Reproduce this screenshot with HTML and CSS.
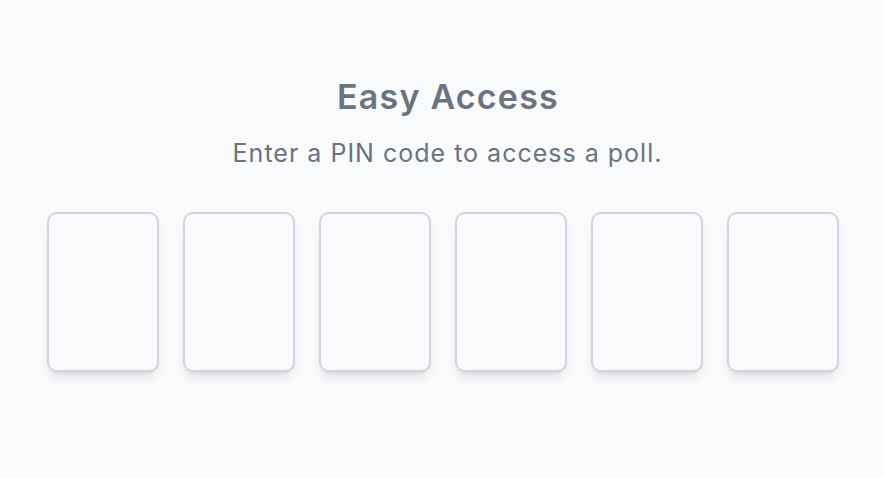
FILE: index.html
```html
<!DOCTYPE html>
<html lang="en">
<head>
    <meta charset="UTF-8">
    <meta name="viewport" content="width=device-width, initial-scale=1.0">
    <title>Easy Access</title>
    <link rel="stylesheet" href="styles.css">
</head>
<body>

    <div class="access-container">
        <h2>Easy Access</h2>
        <p class="subtitle">Enter a PIN code to access a poll.</p>

        <form class="pin-form">
            <input type="text" class="pin-box" maxlength="1" aria-label="PIN digit 1">
            <input type="text" class="pin-box" maxlength="1" aria-label="PIN digit 2">
            <input type="text" class="pin-box" maxlength="1" aria-label="PIN digit 3">
            <input type="text" class="pin-box" maxlength="1" aria-label="PIN digit 4">
            <input type="text" class="pin-box" maxlength="1" aria-label="PIN digit 5">
            <input type="text" class="pin-box" maxlength="1" aria-label="PIN digit 6">
        </form>
    </div>

</body>
</html>
```

FILE: styles.css
```css
body {
    margin: 0;
    height: 100vh;
    background: #f9fafb;
    font-family: Inter, "Noto Sans", sans-serif;
    color: #6b7280;
}

.access-container {
    text-align: center;
    padding-top: 75px;
}

.access-container h2 {
    margin: 0;
    padding-left: 12px;
    font-size: 34px;
    font-weight: 600;
    line-height: 44px;
    letter-spacing: 1.2px;
}

.subtitle {
    margin: 18px 0 0;
    padding-left: 11px;
    font-size: 25px;
    line-height: 32px;
    letter-spacing: 1px;
}

.pin-form {
    display: flex;
    justify-content: center;
    gap: 24px;
    margin-top: 43px;
    padding-left: 2px;
}

.pin-box {
    width: 112px;
    height: 160px;
    box-sizing: border-box;
    border: 2px solid #d1d5db;
    border-radius: 10px;
    background: #f9fafb;
    box-shadow: 0 8px 12px -3px rgba(0, 0, 0, 0.1), 0 3px 5px -3px rgba(0, 0, 0, 0.1);
    font-size: 48px;
    text-align: center;
    color: #374151;
    outline: none;
}
```
